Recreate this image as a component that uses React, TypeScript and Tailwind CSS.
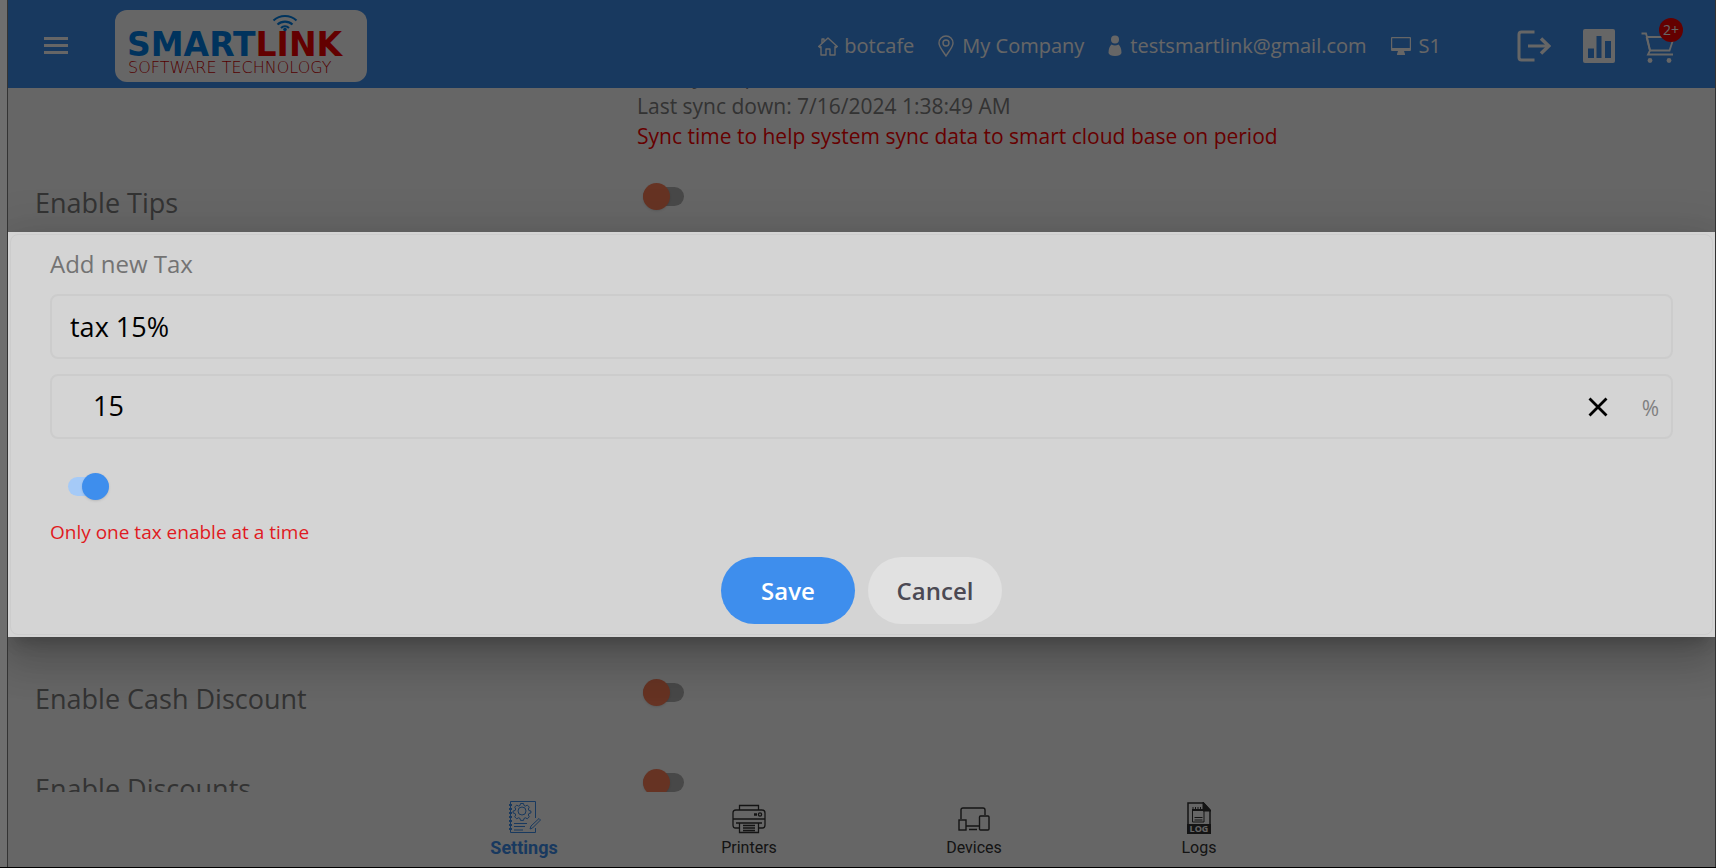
import React, { useState } from 'react';

const SWITCH =
  'relative h-[19px] w-[41px] appearance-none rounded-full bg-[#b4b4b4] cursor-pointer before:absolute before:-top-1 before:left-0 before:h-[27px] before:w-[27px] before:rounded-full before:bg-[#ff7f57] before:shadow checked:bg-[#a5caf7] checked:before:left-[14px] checked:before:bg-[#3e8eed]';

function Logo() {
  return (
    <svg viewBox="0 0 252 72" className="h-[72px] w-[252px] rounded-xl bg-white" role="img" aria-label="Smartlink Software Technology">
      <text x="12" y="46" fontFamily="DejaVu Sans" fontWeight="700" fontSize="33" fill="#0080e8">
        SMART<tspan fill="#f80000">LINK</tspan>
      </text>
      <text x="13" y="63" fontFamily="DejaVu Sans" fontWeight="200" fontSize="16" fill="#d00000">SOFTWARE TECHNOLOGY</text>
      <g fill="none" stroke="#0080e8" strokeWidth="2.2">
        <path d="M158.500 10.500 A17 17 0 0 1 181.500 10.500" />
        <path d="M162.500 14.500 A11 11 0 0 1 177.500 14.500" />
        <path d="M166 18 A6 6 0 0 1 174 18" />
      </g>
      <circle cx="170" cy="19.500" r="1.800" fill="#0080e8" />
    </svg>
  );
}

function HomeIcon() {
  return (
    <svg viewBox="0 0 20 20" className="h-5 w-5" fill="none" stroke="currentColor" strokeWidth="1.4" strokeLinejoin="round">
      <path d="M.7 10.500 10 2l9.300 8.500-1.300 1-1-.9V19h-5v-6H8v6H3v-8.400l-1 .9zM4 7V3h2v2.300" />
    </svg>
  );
}

function PinIcon() {
  return (
    <svg viewBox="0 0 16 22" className="h-[22px] w-4" fill="none" stroke="currentColor" strokeWidth="1.4">
      <path d="M8 21C5 16 1 12 1 8a7 7 0 0 1 14 0c0 4-4 8-7 13z" />
      <circle cx="8" cy="8" r="3" />
    </svg>
  );
}

function PersonIcon() {
  return (
    <svg viewBox="0 0 14 22" className="h-[22px] w-[14px]" fill="currentColor">
      <circle cx="7" cy="4.500" r="4" />
      <path d="M3.500 9.500q3.500 2 7 0Q13.500 12 13.500 18q-1 3-6.500 3t-6.500-3q0-6 3-8.500z" />
    </svg>
  );
}

function MonitorIcon() {
  return (
    <svg viewBox="0 0 20 20" className="h-5 w-5" fill="currentColor">
      <path d="M1 1h18a1 1 0 0 1 1 1v12a1 1 0 0 1-1 1h-6l1 3v1H6v-1l1-3H1a1 1 0 0 1-1-1V2a1 1 0 0 1 1-1zm.2 1.200V12h17.600V2.200z" fillRule="evenodd" />
    </svg>
  );
}

function LogoutIcon() {
  return (
    <svg viewBox="0 0 34 32" className="h-8 w-[34px]" fill="none" stroke="currentColor" strokeWidth="3">
      <path d="M17.500 2H4.500Q2 2 2 4.500v23Q2 30 4.500 30h13M11 16h20" />
      <path d="m24 8.500 7.800 7.500-7.800 7.500" strokeWidth="3.500" />
    </svg>
  );
}

function ChartIcon() {
  return (
    <svg viewBox="0 0 32 34" className="h-[34px] w-8">
      <rect width="32" height="34" rx="2" fill="currentColor" />
      <path d="M5 19.500h6V29H5zM13.500 7h5v22h-5zM22 12h6v17h-6z" fill="#3e8eed" />
    </svg>
  );
}

function CartIcon() {
  return (
    <svg viewBox="0 0 34 32" className="h-8 w-[34px]" fill="none" stroke="currentColor" strokeWidth="1.800">
      <path d="M.5 1.500h4.500l1 3.500h27l-4.500 13.500H9L5.500 5" />
      <path d="M6 5 9 18.500 7 22.500h25" />
      <circle cx="9" cy="28.500" r="2.400" fill="currentColor" stroke="none" />
      <circle cx="28" cy="28.500" r="2.400" fill="currentColor" stroke="none" />
    </svg>
  );
}

function SettingsIcon() {
  return (
    <svg viewBox="0 0 33 34" className="h-[34px] w-[33px]" fill="none" stroke="currentColor" strokeWidth="1">
      <path d="M27.500 18V1.500h-25v31h25V28" />
      <path d="M1 5h3M1 9h3M1 13h3M1 17h3M1 21h3M1 25h3M1 29h3" strokeWidth="2" />
      <circle cx="14" cy="11" r="4" />
      <path d="m12.500 3.500 3 0 .5 2 1.500.6 1.800-1 2 2-1 1.900.6 1.500 2 .5v2l-2 .5-.6 1.500 1 1.800-2 2-1.800-1-1.500.6-.5 2h-3l-.5-2-1.500-.6-1.800 1-2-2 1-1.800-.6-1.500-2-.5v-2l2-.5.6-1.500-1-1.900 2-2 1.800 1 1.500-.6z" />
      <path d="M6 23.500h13M6 26.500h11M6 30h9M22 29l1-3 8-7.500 1.500 1.500-8 8z" />
    </svg>
  );
}

function PrinterIcon() {
  return (
    <svg viewBox="0 0 34 30" className="h-[30px] w-[34px]" fill="none" stroke="currentColor" strokeWidth="1.300">
      <path d="M7.500 6V1.500h19V6M7 24H3.500Q1 24 1 21V9q0-3 3-3h26q3 0 3 3v12q0 3-2.500 3H27M1 15h32M4 19h26M7.500 19v9.500h19V19M11 21.500h12M11 24h12M11 26.500h12" />
      <circle cx="28" cy="10.500" r="1.600" />
      <path d="M22 10.500h3" strokeWidth="2.500" />
    </svg>
  );
}

function DevicesIcon() {
  return (
    <svg viewBox="0 0 32 24" className="mb-[3px] h-6 w-8" fill="none" stroke="currentColor" strokeWidth="1.400">
      <path d="M3 12V3q0-2 2-2h20q2 0 2 2v5M8 19h13M11 22.500h8" />
      <rect x="1" y="13" width="7" height="10" />
      <rect x="21.500" y="9" width="9.500" height="14" rx="1" />
    </svg>
  );
}

function LogsIcon() {
  return (
    <svg viewBox="0 0 24 32" className="h-8 w-6" fill="none" stroke="currentColor">
      <path d="M1 31V1h15.500L23 8v23z" strokeWidth="1.500" />
      <path d="M16 0l8 9h-8z" fill="currentColor" />
      <path d="M5.500 9v11h11.500V9M7.500 15.500h8M7.500 18h8" />
      <path d="M5 8h11" strokeWidth="2" />
      <path d="M6 5v3M8.500 5v3M11 5v3M13.500 5v3" />
      <path d="M0 22h24v10H0z" fill="currentColor" stroke="none" />
      <text x="12" y="30" textAnchor="middle" fontFamily="Open Sans" fontWeight="700" fontSize="9" fill="#fff" stroke="none">LOG</text>
    </svg>
  );
}

const NAV = [
  { label: 'Settings', icon: <SettingsIcon />, active: true },
  { label: 'Printers', icon: <PrinterIcon />, active: false },
  { label: 'Devices', icon: <DevicesIcon />, active: false },
  { label: 'Logs', icon: <LogsIcon />, active: false },
];

function Header() {
  return (
    <header className="flex h-[88px] shrink-0 items-center bg-[#3e8eed] pl-9 pr-10 pt-1 text-xl text-white">
      <button aria-label="Menu" className="mr-[47px] flex w-6 flex-col gap-1 pb-0.5">
        <span className="h-[3px] bg-white" />
        <span className="h-[3px] bg-white" />
        <span className="h-[3px] bg-white" />
      </button>
      <Logo />
      <div className="ml-auto flex items-center gap-6">
        <span className="flex items-center gap-1.5"><HomeIcon />botcafe</span>
        <span className="flex items-center gap-2"><PinIcon />My Company</span>
        <span className="flex items-center gap-2"><PersonIcon />testsmartlink@gmail.com</span>
        <span className="flex items-center gap-2"><MonitorIcon />S1</span>
      </div>
      <div className="ml-[76px] flex items-center gap-8">
        <button aria-label="Log out"><LogoutIcon /></button>
        <button aria-label="Reports"><ChartIcon /></button>
        <button aria-label="Cart" className="relative -ml-1.5 pt-1">
          <CartIcon />
          <span className="absolute -right-2 -top-2.5 flex h-6 w-6 items-center justify-center rounded-full bg-[#fa0000] text-sm">2+</span>
        </button>
      </div>
    </header>
  );
}

function SettingRow({ id, label }: { id: string; label: string }) {
  return (
    <div className="grid h-[90px] grid-cols-[43fr_77fr] items-center pl-[27px]">
      <label htmlFor={id} className="pt-3.5 text-[27px] text-[#808080]">{label}</label>
      <input id={id} type="checkbox" role="switch" className={`${SWITCH} ml-1.5`} />
    </div>
  );
}

function TaxDialog() {
  const [name, setName] = useState('tax 15%');
  const [rate, setRate] = useState('15');

  return (
    <div className="absolute inset-0 flex items-center bg-black/60 pt-0.5">
      <div role="dialog" aria-labelledby="tax-title" className="w-full bg-[#d4d4d4] p-0.5 shadow-[0_11px_15px_-7px_rgba(0,0,0,0.2),0_24px_38px_3px_rgba(0,0,0,0.14),0_9px_46px_8px_rgba(0,0,0,0.12)]">
        <form className="rounded-lg border border-[#cccccc] px-[39px] pb-2.5 pt-[11px]" onSubmit={e => e.preventDefault()}>
          <h2 id="tax-title" className="text-2xl leading-9 text-[#737373]">Add new Tax</h2>
          <input
            aria-label="Tax name"
            value={name}
            onChange={e => setName(e.target.value)}
            className="mt-3 h-[65px] w-full rounded-lg border-2 border-[#cccccc] px-[18px] text-[27px] text-black outline-none"
          />
          <div className="mt-[15px] flex h-[65px] items-center rounded-lg border-2 border-[#cccccc] pl-[41px] pr-3">
            <input
              aria-label="Tax rate"
              value={rate}
              onChange={e => setRate(e.target.value)}
              className="min-w-0 flex-1 text-[27px] text-black outline-none"
            />
            <button type="button" aria-label="Clear" onClick={() => setRate('')} className="mr-[34px]">
              <svg viewBox="0 0 20 20" className="h-5 w-5" stroke="#000" strokeWidth="2.800">
                <path d="M1.500 1.500l17 17M18.500 1.500l-17 17" />
              </svg>
            </button>
            <span className="pt-1 text-[21px] text-[#808080]">%</span>
          </div>
          <div className="mt-[38px] flex pl-[18px]">
            <input type="checkbox" role="switch" aria-label="Enable tax" defaultChecked className={SWITCH} />
          </div>
          <p className="mt-[21px] text-[19px] leading-[30px] text-[#e01a22]">Only one tax enable at a time</p>
          <div className="mt-2.5 flex justify-center gap-[13px] text-2xl font-semibold">
            <button type="submit" className="h-[67px] w-[134px] rounded-full bg-[#3e8eed] text-white">Save</button>
            <button type="button" className="h-[67px] w-[134px] rounded-full bg-[#e1e1e1] text-[#4b4953]">Cancel</button>
          </div>
        </form>
      </div>
    </div>
  );
}

export default function App() {
  return (
    <div className="flex h-screen border-b border-black bg-[#6e6e6e] pl-[7px] font-['Open_Sans',sans-serif]">
      <div className="relative flex min-w-0 flex-1 flex-col overflow-hidden border-x border-[#333333] bg-white">
        <Header />
        <main className="min-h-0 flex-1 overflow-hidden">
          <div className="-mt-[27px] grid grid-cols-[43fr_77fr] pl-[27px] text-[21px] leading-[30px] text-[#808080]">
            <div className="col-start-2">
              <p>Last sync up: 7/16/2024 1:38:49 AM</p>
              <p>Last sync down: 7/16/2024 1:38:49 AM</p>
              <p className="text-[#ff0000]">Sync time to help system sync data to smart cloud base on period</p>
            </div>
          </div>
          <SettingRow id="tips" label="Enable Tips" />
          <div className="h-[406px]" />
          <SettingRow id="cash-discount" label="Enable Cash Discount" />
          <SettingRow id="discounts" label="Enable Discounts" />
        </main>
        <nav className="flex h-[75px] shrink-0 justify-center bg-white font-['Roboto',sans-serif]">
          {NAV.map(item => (
            <button
              key={item.label}
              className={`flex w-[225px] flex-col items-center justify-end gap-0.5 pb-[7px] ${item.active ? 'text-lg font-bold text-[#3e8eed]' : 'text-base text-[#333333]'}`}
            >
              {item.icon}
              <span className="leading-6">{item.label}</span>
            </button>
          ))}
        </nav>
        <TaxDialog />
      </div>
    </div>
  );
}
